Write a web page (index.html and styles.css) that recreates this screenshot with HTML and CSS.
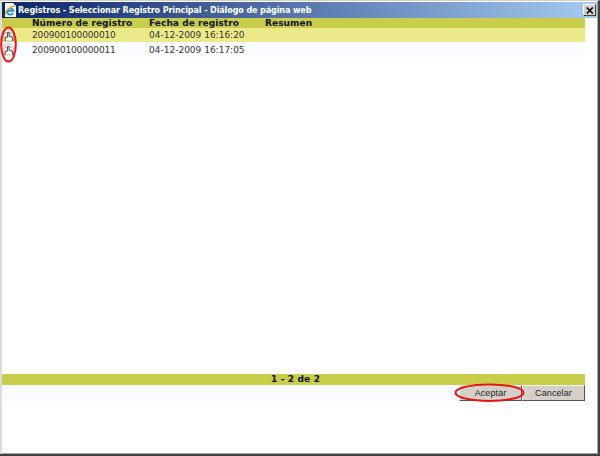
FILE: index.html
```html
<!DOCTYPE html>
<html lang="es">
<head>
<meta charset="utf-8">
<title>Registros</title>
<link rel="stylesheet" href="styles.css">
</head>
<body>
<svg width="0" height="0" class="defs">
  <symbol id="hand" viewBox="0 0 12 13">
    <path d="M1 .6h7.5L11.4 3.5v9H1z" fill="#fff" fill-opacity=".8" stroke="#a9a9a0" stroke-width=".8"/>
    <path d="M2.4 12.4V9L4.8 7.6M5 8V3.6q.9-1.2 1.7 0V7l2.6.8q1.2.5 1.2 1.8v2.8" fill="none" stroke="#44444a" stroke-width="1.1"/>
    <path d="M2.6 5l1.2-2.4M7.8 3l1.2 2M4 7.5l1.6 1" stroke="#c0606c" stroke-width=".9"/>
  </symbol>
</svg>
<div class="window">
  <header class="titlebar">
    <svg class="ie" viewBox="0 0 12 14" width="12" height="14">
      <path d="M1 0h8l3 3v11H1z" fill="#f5f8f5"/>
      <path d="M9 10.2A3.2 3.2 0 1 1 9.4 7.8H3.4" fill="none" stroke="#278bd0" stroke-width="1.8"/>
      <path d="M1.4 12.4C0 9 7 2.5 11 3.2" fill="none" stroke="#d7a72d" stroke-width="1.2"/>
    </svg>
    <span class="title">Registros - Seleccionar Registro Principal - Diálogo de página web</span>
    <button class="close" aria-label="Cerrar"><svg viewBox="0 0 8 7" width="8" height="7"><path d="M.8.5l6 6M6.8.5l-6 6" stroke="#000" stroke-width="1.5"/></svg></button>
  </header>
  <main class="content">
    <div class="row head"><span></span><span>Número de registro</span><span>Fecha de registro</span><span>Resumen</span></div>
    <div class="row selected"><svg class="hand"><use href="#hand"/></svg><span class="number">200900100000010</span><span>04-12-2009 16:16:20</span></div>
    <div class="row alt"><svg class="hand"><use href="#hand"/></svg><span class="number">200900100000011</span><span>04-12-2009 16:17:05</span></div>
    <div class="space"></div>
    <div class="pager">1 - 2 de 2</div>
    <div class="actions"><button>Aceptar</button><button>Cancelar</button></div>
  </main>
</div>
<svg class="marks" width="600" height="456" fill="none" stroke="#e8141a" stroke-width="2">
  <ellipse cx="8.5" cy="44.5" rx="7.3" ry="17"/>
  <ellipse cx="489.5" cy="392.7" rx="34" ry="8.3"/>
</svg>
</body>
</html>
```
FILE: styles.css
```css
* { box-sizing: border-box; }
body { margin: 0; width: 600px; height: 456px; overflow: hidden; background: #fff; }
.defs { position: absolute; }
.window {
  height: 456px;
  padding: 1px 1px 1px 2px;
  border: solid;
  border-width: 1px 2px 2px 0;
  border-color: #d4d0c8 #404040 #404040;
  background: #fff;
  box-shadow: inset 2px 0 #dedbd5, inset -1px -1px #aaa7a0;
}
.titlebar {
  display: flex;
  align-items: center;
  height: 16px;
  padding: 0 1px 0 2px;
  background: linear-gradient(90deg, #0a246a, #a6caf0);
  color: #fff;
  font: bold 9px/14px "DejaVu Sans Condensed", "DejaVu Sans", sans-serif;
}
.ie { margin-right: 2px; }
.title { white-space: nowrap; letter-spacing: -.14px; }
.close {
  display: flex;
  align-items: center;
  justify-content: center;
  width: 13px;
  height: 12px;
  margin-left: auto;
  padding: 0;
  border: 1px solid;
  border-color: #fff #404040 #404040 #fff;
  background: #d4d0c8;
}
.content { width: 583px; color: #35352e; font: 9px/14px "DejaVu Sans", sans-serif; }
.row {
  display: grid;
  grid-template-columns: 30px 117px 116px 1fr;
  align-items: center;
  height: 14px;
  white-space: nowrap;
}
.head { height: 10px; background: #c8ce4b; color: #111; font-weight: bold; line-height: 10px; letter-spacing: .06px; }
.selected { background: #ece98b; }
.alt { height: 15px; background: #fafbff; }
.number { letter-spacing: -.15px; }
.hand { width: 11px; height: 13px; margin-left: 1px; }
.space { height: 317px; }
.pager {
  height: 11px;
  padding-left: 4px;
  background: #c8ce4b;
  color: #111;
  font-weight: bold;
  line-height: 11px;
  letter-spacing: .15px;
  text-align: center;
}
.actions { display: flex; justify-content: flex-end; height: 16px; background: #fafbff; }
.actions button {
  width: 63px;
  height: 16px;
  padding: 0;
  border: 1px solid;
  border-color: #f4f3ef #55534f #55534f #f4f3ef;
  background: #d4d0c8;
  color: #222;
  font: 9px/14px "Liberation Sans", sans-serif;
  letter-spacing: .1px;
}
.marks { position: absolute; left: 0; top: 0; pointer-events: none; }
```
